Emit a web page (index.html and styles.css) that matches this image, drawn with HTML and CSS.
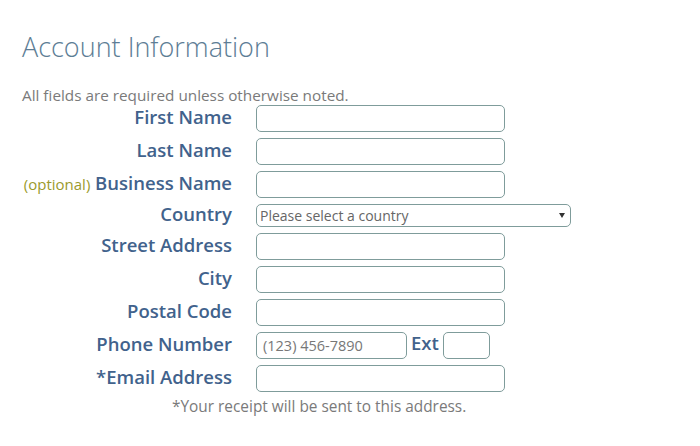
FILE: index.html
```html
<!DOCTYPE html>
<html>
<head>
<meta charset="utf-8">
<link rel="stylesheet" href="styles.css">
</head>
<body>
<div class="page">
  <h1 class="title">Account Information</h1>
  <p class="note">All fields are required unless otherwise noted.</p>
  <form class="form">
    <div class="row">
      <label class="label">First Name</label>
      <input class="field" type="text">
    </div>
    <div class="row">
      <label class="label">Last Name</label>
      <input class="field" type="text">
    </div>
    <div class="row">
      <label class="label"><span class="optional">(optional)</span> Business Name</label>
      <input class="field" type="text">
    </div>
    <div class="row">
      <label class="label">Country</label>
      <div class="select-wrap">
        <select class="select"><option>Please select a country</option></select>
      </div>
    </div>
    <div class="row">
      <label class="label">Street Address</label>
      <input class="field" type="text">
    </div>
    <div class="row">
      <label class="label">City</label>
      <input class="field" type="text">
    </div>
    <div class="row">
      <label class="label">Postal Code</label>
      <input class="field" type="text">
    </div>
    <div class="row">
      <label class="label">Phone Number</label>
      <div class="phone">
        <input class="field phone-field" type="text" placeholder="(123) 456-7890">
        <span class="ext-label">Ext</span>
        <input class="field ext-field" type="text">
      </div>
    </div>
    <div class="row">
      <label class="label">*Email Address</label>
      <input class="field" type="text">
    </div>
    <p class="receipt">*Your receipt will be sent to this address.</p>
  </form>
</div>
</body>
</html>
```
FILE: styles.css
```css
html, body {
  margin: 0;
  padding: 0;
  background: #ffffff;
}
body {
  font-family: "Open Sans", "Liberation Sans", sans-serif;
}
.page {
  padding: 29px 0 0 22px;
}
.title {
  margin: 0;
  font-size: 27px;
  font-weight: 300;
  color: #5d7d95;
  line-height: 36px;
}
.note {
  margin: 20px 0 0 0;
  font-size: 15.3px;
  line-height: 20px;
  color: #7a7a7a;
}
.form {
  display: flex;
  flex-direction: column;
  gap: 6px;
  margin-top: 0;
}
.row {
  display: grid;
  grid-template-columns: 210px auto;
  column-gap: 24px;
  align-items: center;
}
.label {
  text-align: right;
  font-size: 18.5px;
  font-weight: 600;
  color: #41628c;
  line-height: 20px;
  padding-bottom: 3px;
  white-space: nowrap;
}
.optional {
  font-size: 15px;
  color: #9b9a2c;
  font-weight: 400;
}
.field {
  box-sizing: border-box;
  width: 249px;
  height: 27px;
  border: 1px solid #7f9c9b;
  border-radius: 5px;
  background: #fff;
  padding: 0 6px;
  font-family: inherit;
  font-size: 14.5px;
  color: #555;
  outline: none;
  margin: 0;
}
.field::placeholder {
  color: #777;
}
.select-wrap {
  position: relative;
  width: 315px;
}
.select {
  display: block;
  box-sizing: border-box;
  appearance: none;
  -webkit-appearance: none;
  width: 315px;
  height: 23px;
  border: 1px solid #7f9c9b;
  border-radius: 5px;
  background: #fff;
  padding: 0 3px;
  font-family: inherit;
  font-size: 14px;
  color: #666;
  margin: 0;
  outline: none;
}
.select-wrap::after {
  content: "";
  position: absolute;
  right: 6px;
  top: 9px;
  border-left: 3px solid transparent;
  border-right: 3px solid transparent;
  border-top: 5px solid #333;
}
.phone {
  display: flex;
  align-items: center;
}
.phone-field {
  width: 151px;
}
.ext-label {
  font-size: 18.5px;
  font-weight: 600;
  color: #41628c;
  margin: 0 4px 0 4px;
  line-height: 22px;
  align-self: flex-start;
}
.ext-field {
  width: 47px;
}
.receipt {
  margin: -1px 0 0 150px;
  font-size: 15.4px;
  color: #7a7a7a;
  line-height: 20px;
}
```
